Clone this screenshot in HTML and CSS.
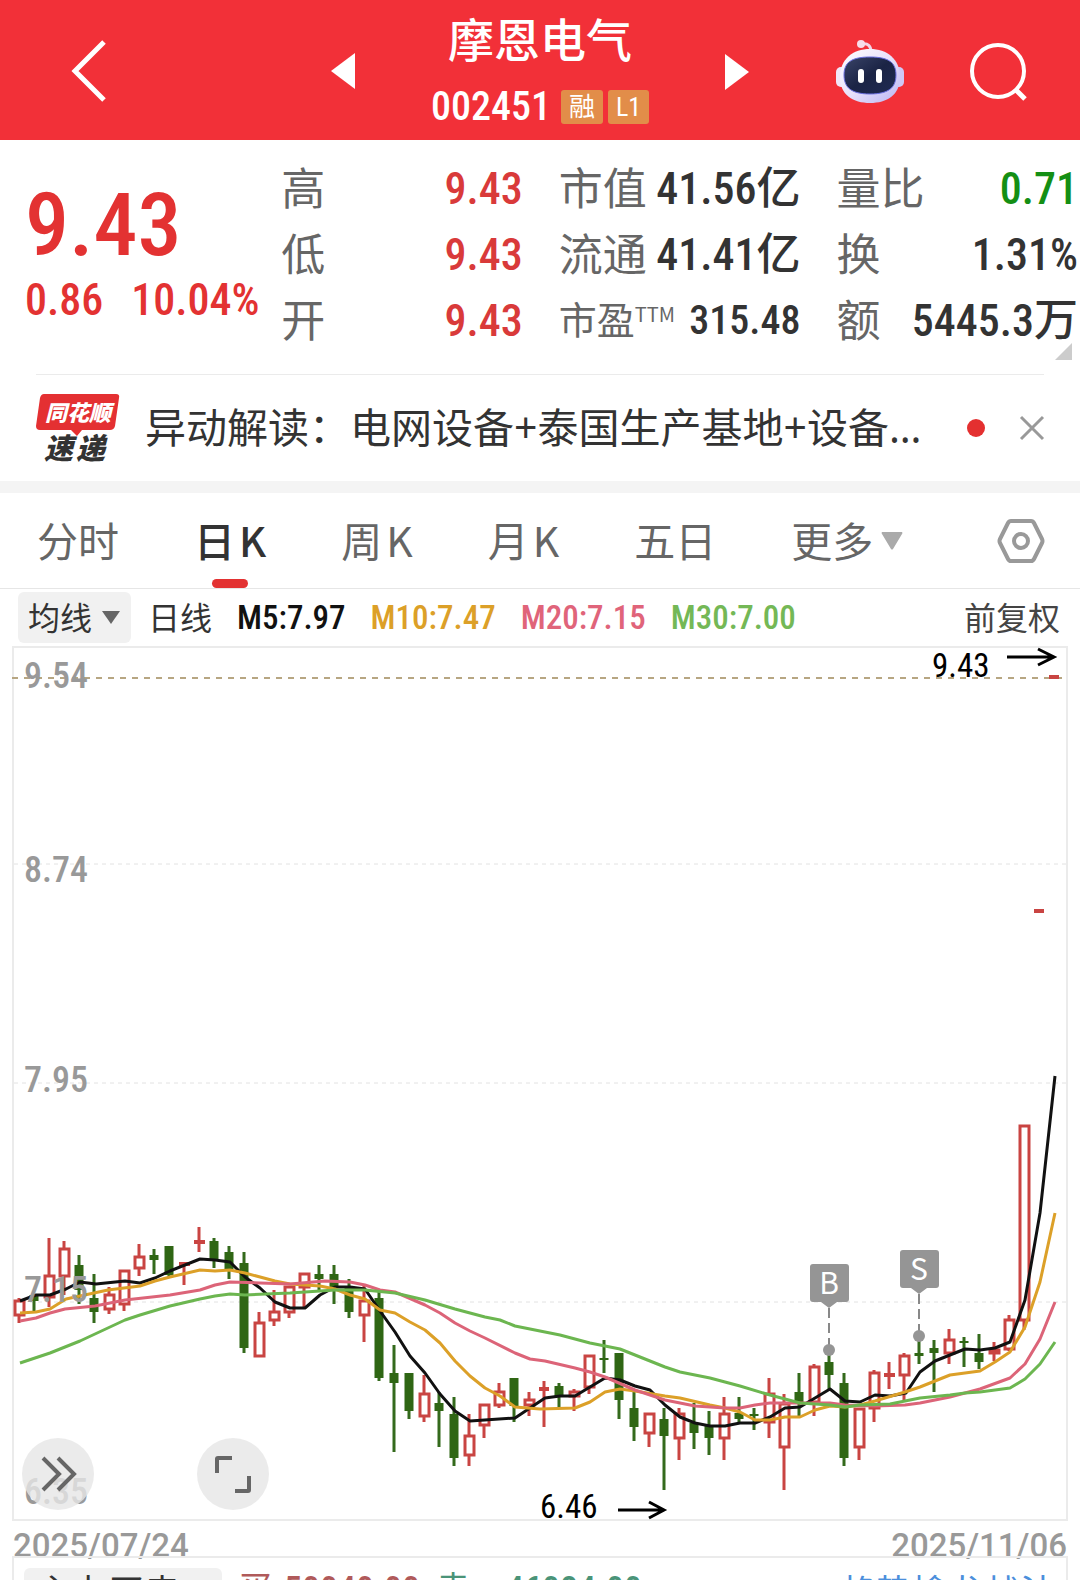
FILE: index.html
```html
<!DOCTYPE html>
<html lang="zh-CN">
<head>
<meta charset="utf-8">
<meta name="viewport" content="width=device-width, initial-scale=1">
<title>摩恩电气 002451</title>
<link rel="stylesheet" href="styles.css">
</head>
<body>
<div class="app">
  <header class="topbar">
    <div class="topbar-side topbar-left">
      <button class="icon-btn" aria-label="返回"><svg width="34" height="62" viewBox="0 0 34 62"><path d="M32 2 3 31l29 29" fill="none" stroke="#fff" stroke-width="5"/></svg></button>
      <button class="icon-btn" aria-label="上一只"><svg width="24" height="36" viewBox="0 0 24 36"><path d="M24 0v36L0 18z" fill="#fff"/></svg></button>
    </div>
    <div class="stock">
      <h1 class="stock-name">摩恩电气</h1>
      <div class="stock-meta"><span class="stock-code">002451</span><span class="tag">融</span><span class="tag">L1</span></div>
    </div>
    <div class="topbar-side topbar-right">
      <button class="icon-btn" aria-label="下一只"><svg width="24" height="36" viewBox="0 0 24 36"><path d="M0 0v36l24-18z" fill="#fff"/></svg></button>
      <button class="icon-btn robot" aria-label="智能助手">
        <svg width="68" height="64" viewBox="0 0 68 64">
          <defs>
            <linearGradient id="shell" x1="0" y1="0" x2="1" y2="1"><stop offset="0" stop-color="#fff"/><stop offset=".5" stop-color="#e9e2fb"/><stop offset="1" stop-color="#b9b4f2"/></linearGradient>
            <linearGradient id="visor" x1="0" y1="0" x2="1" y2="1"><stop offset="0" stop-color="#3a4468"/><stop offset=".5" stop-color="#1b2445"/><stop offset="1" stop-color="#202a52"/></linearGradient>
          </defs>
          <path d="M26 4c6-1 9 2 9 8" fill="none" stroke="#f3d5e6" stroke-width="3"/>
          <circle cx="25" cy="4" r="4" fill="#f7dce9"/>
          <rect x="0" y="27" width="12" height="20" rx="5" fill="#f1e6f8"/>
          <rect x="56" y="27" width="12" height="20" rx="5" fill="#cfc8f6"/>
          <path d="M34 9c17 0 30 10 30 28S51 63 34 63 4 55 4 37 17 9 34 9z" fill="url(#shell)"/>
          <path d="M34 17c18 0 26 5 26 18S52 54 34 54 8 48 8 35s8-18 26-18z" fill="url(#visor)" stroke="#6b6fe0" stroke-width="1"/>
          <rect x="22" y="29" width="6" height="14" rx="3" fill="#fff"/>
          <rect x="40" y="29" width="6" height="14" rx="3" fill="#fff"/>
        </svg>
      </button>
      <button class="icon-btn" aria-label="搜索"><svg width="58" height="58" viewBox="0 0 58 58"><circle cx="28" cy="28" r="26" fill="none" stroke="#fff" stroke-width="4"/><path d="m45 46 10 10" stroke="#fff" stroke-width="5"/></svg></button>
    </div>
  </header>

  <section class="quote">
    <div class="price">
      <div class="price-now">9.43</div>
      <div class="price-change"><span>0.86</span><span>10.04%</span></div>
    </div>
    <dl class="stats">
      <div class="stat"><dt>高</dt><dd class="up">9.43</dd></div>
      <div class="stat"><dt>市值</dt><dd>41.56亿</dd></div>
      <div class="stat"><dt>量比</dt><dd class="down">0.71</dd></div>
      <div class="stat"><dt>低</dt><dd class="up">9.43</dd></div>
      <div class="stat"><dt>流通</dt><dd>41.41亿</dd></div>
      <div class="stat"><dt>换</dt><dd>1.31%</dd></div>
      <div class="stat"><dt>开</dt><dd class="up">9.43</dd></div>
      <div class="stat stat-small"><dt>市盈<sup>TTM</sup></dt><dd>315.48</dd></div>
      <div class="stat"><dt>额</dt><dd>5445.3万</dd></div>
    </dl>
    <svg class="expand" width="17" height="17" viewBox="0 0 17 17"><path d="M17 0v17H0z" fill="#ccc"/></svg>
  </section>

  <section class="news">
    <svg class="news-logo" width="84" height="68" viewBox="0 0 84 68" role="img" aria-label="同花顺速递">
      <path d="M8 0h72q4 0 3 4l-4 28q-1 4-5 4H46l-5 6-6-6H4q-4 0-4-4L4 4q1-4 4-4z" fill="#e43032"/>
      <text class="logo-top" x="9" y="27">同花顺</text>
      <text class="logo-bottom" x="8" y="65">速</text><text class="logo-bottom" x="40" y="65">递</text>
    </svg>
    <a class="news-text" href="#news">异动解读：电网设备+泰国生产基地+设备…</a>
    <span class="dot"></span>
    <button class="icon-btn" aria-label="关闭"><svg width="24" height="24" viewBox="0 0 24 24"><path d="m1 1 22 22M23 1 1 23" stroke="#999" stroke-width="3"/></svg></button>
  </section>

  <nav class="tabs">
    <button class="tab">分时</button>
    <button class="tab tab-k active">日<span>K</span></button>
    <button class="tab tab-k">周<span>K</span></button>
    <button class="tab tab-k">月<span>K</span></button>
    <button class="tab">五日</button>
    <button class="tab">更多<svg class="tab-arrow" width="22" height="18" viewBox="0 0 22 18"><path d="M1 0h20q1 1 0 2L12 17q-1 1-2 0L1 2Q0 1 1 0z" fill="#aaa"/></svg></button>
    <button class="icon-btn settings" aria-label="设置"><svg width="46" height="44" viewBox="0 0 46 44"><path d="M13 2h20q2 0 3 2l8 16q1 2 0 4l-8 16q-1 2-3 2H13q-2 0-3-2L2 24q-1-2 0-4l8-16q1-2 3-2z" fill="none" stroke="#999" stroke-width="4"/><circle cx="23" cy="22" r="7" fill="none" stroke="#999" stroke-width="4"/></svg></button>
  </nav>

  <div class="legend">
    <button class="pill"><span>均线</span><svg width="18" height="13" viewBox="0 0 18 13"><path d="M0 0h18L9 13z" fill="#666"/></svg></button>
    <span class="legend-period">日线</span>
    <span class="ma ma5">M5:7.97</span>
    <span class="ma ma10">M10:7.47</span>
    <span class="ma ma20">M20:7.15</span>
    <span class="ma ma30">M30:7.00</span>
    <button class="adjust">前复权</button>
  </div>

  <div class="chart">
    <svg class="chart-svg" viewBox="0 645 1080 876" role="img" aria-label="日K线图">
      <rect x="13" y="647" width="1054" height="873" fill="none" stroke="#ebebeb" stroke-width="2"/>
      <path class="grid" d="M14 864H1066M14 1083H1066M14 1302H1066"/>
      <path class="limit" d="M12 678H1063"/>

      <path class="wick-up" d="M19 1298v25M49 1238v69M64 1241v54M109 1287v27M124 1270v41M139 1244v32M184 1264v21M199 1227v25M259 1312v44M274 1290v36M289 1286v32M304 1273v34M364 1286v56M424 1375v47M469 1414v52M484 1404v34M499 1383v25M529 1392v24M544 1381v46M574 1389v22M589 1355v39M649 1413v34M679 1408v52M724 1397v63M769 1378v60M784 1394v96M814 1364v52M859 1408v52M874 1370v52M889 1362v27M904 1353v47M949 1329v35M994 1342v19M1009 1315v36M1024 1125v205"/>
      <path class="body-up" d="M15 1301h9v14h-9zM45 1276h9v21h-9zM60 1249h9v27h-9zM105 1295h9v14h-9zM120 1271h9v33h-9zM135 1257h9v11h-9zM255 1323h9v33h-9zM270 1312h9v8h-9zM285 1287h9v25h-9zM300 1274h9v13h-9zM360 1301h9v14h-9zM420 1394h9v22h-9zM465 1436h9v19h-9zM480 1405h9v20h-9zM495 1392h9v13h-9zM525 1400h9v5h-9zM570 1392h9v4h-9zM585 1356h9v31h-9zM645 1414h9v19h-9zM675 1414h9v24h-9zM720 1414h9v24h-9zM765 1394h9v28h-9zM780 1404h9v43h-9zM810 1367h9v35h-9zM855 1409h9v38h-9zM870 1373h9v35h-9zM900 1356h9v19h-9zM945 1340h9v13h-9zM990 1350h9v3h-9zM1005 1320h9v29h-9zM1020 1126h9v194h-9z"/>
      <path class="bar-up" d="M179 1264h11M194 1242h11M539 1389h10M884 1375h11M1034 911h10M1049 677h10"/>

      <path class="wick-down" d="M34 1295v16M79 1255v49M94 1274v49M154 1249v25M169 1246v32M214 1238v30M229 1246v33M244 1252v101M319 1265v26M334 1265v39M349 1279v39M379 1291v90M394 1345v107M409 1373v46M439 1392v55M454 1397v69M514 1378v44M559 1383v24M604 1340v33M619 1353v66M634 1392v49M664 1408v82M694 1403v46M709 1411v44M739 1397v25M754 1408v22M799 1373v43M829 1351v39M844 1373v93M919 1337v27M934 1340v52M964 1337v30M979 1334v35"/>
      <path class="body-down" d="M34 1295v6M79 1265v25M94 1298v14M154 1255v5M169 1246v29M214 1241v20M229 1252v17M244 1263v85M319 1274v5M334 1274v14M349 1288v24M379 1298v80M394 1373v10M409 1373v38M439 1403v8M454 1414v44M514 1378v28M559 1386v11M604 1358v2M619 1353v47M634 1408v19M664 1419v17M694 1423v10M709 1426v12M739 1413v6M754 1414v2M799 1392v11M829 1362v13M844 1383v75M919 1353v3M934 1348v5M964 1341v2M979 1353v9"/>

      <polyline class="line line5" points="20,1301 36,1295 50,1295 66,1289 80,1282 96,1284 125,1281 140,1283 155,1278 170,1271 200,1259 215,1260 230,1262 245,1277 260,1288 275,1302 290,1308 305,1308 320,1295 335,1287 350,1287 365,1289 380,1311 395,1332 410,1356 425,1373 440,1394 455,1411 470,1421 515,1418 530,1408 545,1398 560,1396 575,1396 590,1387 605,1378 620,1380 635,1386 650,1390 665,1405 680,1417 695,1423 710,1426 725,1426 740,1423 755,1423 770,1417 785,1408 800,1407 815,1398 830,1389 845,1401 860,1402 875,1395 890,1396 906,1393 920,1372 935,1361 950,1355 965,1349 980,1350 995,1348 1010,1342 1025,1300 1040,1213 1055,1076"/>
      <polyline class="line line10" points="20,1313 36,1312 50,1309 66,1299 80,1296 108,1290 140,1286 155,1281 170,1277 200,1270 215,1271 230,1270 245,1273 275,1281 290,1284 320,1286 335,1289 350,1295 365,1299 380,1310 395,1313 410,1322 425,1330 440,1343 455,1361 470,1376 485,1388 500,1396 515,1407 540,1409 575,1408 590,1402 605,1392 620,1389 635,1391 665,1396 680,1398 710,1405 725,1408 740,1412 755,1420 770,1420 785,1417 800,1417 815,1410 830,1406 845,1407 860,1405 875,1401 905,1392 920,1387 950,1375 980,1371 995,1362 1010,1352 1025,1327 1040,1282 1055,1213"/>
      <polyline class="line line20" points="20,1321 36,1318 50,1313 65,1309 95,1306 125,1300 170,1295 200,1290 215,1285 230,1282 260,1283 290,1284 325,1281 350,1282 365,1285 380,1290 395,1292 425,1305 440,1313 455,1323 470,1331 485,1338 515,1353 530,1359 545,1361 575,1368 590,1372 605,1377 635,1390 665,1400 695,1406 725,1408 740,1408 755,1405 770,1403 800,1403 830,1403 845,1405 875,1406 905,1405 920,1403 950,1397 980,1389 1010,1378 1025,1364 1040,1339 1055,1302"/>
      <polyline class="line line30" points="20,1363 50,1353 80,1341 125,1320 140,1315 170,1306 200,1299 215,1296 230,1294 245,1295 290,1293 320,1291 335,1290 365,1290 395,1293 425,1300 455,1309 485,1317 500,1320 515,1326 540,1331 560,1335 590,1343 620,1349 635,1355 650,1361 665,1367 680,1372 710,1378 725,1382 740,1386 770,1395 800,1403 830,1405 845,1407 860,1405 890,1404 920,1398 950,1395 965,1393 980,1392 1010,1388 1025,1379 1040,1364 1055,1342"/>

      <g class="axis">
        <text x="24" y="688">9.54</text>
        <text x="24" y="882">8.74</text>
        <text x="24" y="1092">7.95</text>
        <text x="24" y="1302">7.15</text>
        <text x="24" y="1504">6.35</text>
      </g>

      <g class="extreme">
        <text x="932" y="677">9.43</text>
        <path d="M1007 657h46M1038 649l16 8-16 8"/>
        <text x="540" y="1518">6.46</text>
        <path d="M618 1510h44M649 1502l15 8-15 8"/>
      </g>

      <g class="marker">
        <path class="marker-line" d="M829 1308v40"/>
        <circle cx="829" cy="1350" r="6"/>
        <path d="M813 1264h33q3 0 3 3v32q0 3-3 3h-9l-8 6-8-6h-8q-3 0-3-3v-32q0-3 3-3z"/>
        <text x="829" y="1294">B</text>
        <path class="marker-line" d="M919 1294v40"/>
        <circle cx="919" cy="1336" r="6"/>
        <path d="M903 1250h33q3 0 3 3v32q0 3-3 3h-9l-8 6-8-6h-8q-3 0-3-3v-32q0-3 3-3z"/>
        <text x="919" y="1280">S</text>
      </g>
    </svg>
    <div class="chart-tools">
      <button class="round-btn" aria-label="展开"><svg width="36" height="36" viewBox="0 0 36 36"><path d="m3 2 16 16L3 34M18 2l16 16-16 16" fill="none" stroke="#666" stroke-width="4"/></svg></button>
      <button class="round-btn" aria-label="全屏"><svg width="38" height="38" viewBox="0 0 38 38"><path d="M3 18V4q0-1 1-1h14M21 36h13q1 0 1-1V21" fill="none" stroke="#666" stroke-width="4"/></svg></button>
    </div>
  </div>
  <div class="dates"><time>2025/07/24</time><time>2025/11/06</time></div>

  <section class="sub">
    <button class="sub-pick">主力买卖<svg width="18" height="13" viewBox="0 0 18 13"><path d="M0 0h18L9 13z" fill="#666"/></svg></button>
    <span class="sub-value sub-buy"><span>买</span>50040.00</span>
    <span class="sub-value sub-sell"><span>卖</span>46084.00</span>
    <a class="sub-link" href="#strategy">趋势擒龙战法</a>
  </section>
</div>
</body>
</html>
```
FILE: styles.css
```css
:root {
  --cjk: "Noto Sans CJK SC", sans-serif;
  --num: "Roboto Condensed", "Liberation Sans Narrow", "Noto Sans CJK SC", sans-serif;
  --red: #e33232;
}
* { box-sizing: border-box; }
body { margin: 0; background: #fff; color: #333; font-family: var(--cjk); }
button { margin: 0; padding: 0; border: 0; background: none; color: inherit; font: inherit; }
a { color: inherit; text-decoration: none; }
svg { display: block; flex: none; overflow: visible; }
.app { height: 100vh; overflow: hidden; display: flex; flex-direction: column; }
.app > * { flex: none; }
.icon-btn { display: block; flex: none; }

/* top bar */
.topbar { display: grid; grid-template-columns: 355fr 370fr 355fr; min-height: 140px; background: #f23038; color: #fff; }
.topbar-side { display: flex; align-items: center; justify-content: space-between; }
.topbar-left { padding: 2px 0 0 72px; }
.topbar-right { padding: 4px 52px 0 0; }
.robot { margin-left: 20px; }
.stock { display: flex; flex-direction: column; align-items: center; padding-top: 7px; }
.stock-name { margin: 0; font-size: 46px; line-height: 60px; font-weight: 500; }
.stock-meta { display: flex; align-items: center; gap: 5px; margin-top: 18px; height: 44px; }
.stock-code { margin-right: 5px; font: 500 40px/44px var(--num); }
.tag { padding: 0 8px; border-radius: 3px; background: #e28d49; font: 400 26px/34px var(--num); }

/* quote */
.quote { position: relative; display: flex; padding: 16px 2px 20px 25px; }
.price { flex: 256 1 0; color: var(--red); font-family: var(--num); font-weight: 500; }
.price-now { padding-top: 22px; font-size: 88px; line-height: 94px; }
.price-change { display: flex; gap: 28px; font-size: 44px; line-height: 56px; }
.stats { flex: 796 1 0; display: grid; grid-template-columns: repeat(3, 1fr); column-gap: 36px; margin: 0; }
.stat { display: flex; justify-content: space-between; height: 66px; white-space: nowrap; }
.stat dt { color: #666; font-size: 44px; line-height: 60px; }
.stat dd { margin: 0; font: 500 44px/66px var(--num); }
.stat dd.up { color: #d93a3a; }
.stat dd.down { color: #148f14; }
.stat-small dt { font-size: 38px; }
.stat-small dd { font-size: 40px; }
.stat sup { font-size: 20px; line-height: 20px; vertical-align: 12px; }
.expand { position: absolute; right: 8px; bottom: 14px; }

/* news */
.news { display: flex; align-items: center; height: 107px; margin: 0 36px; border-top: 1px solid #ebebeb; }
.news-logo { margin-right: 25px; }
.logo-top { font: italic 900 22px var(--cjk); fill: #fff; }
.logo-bottom { font: italic 900 29px var(--cjk); fill: #333; }
.news-text { flex: 1; min-width: 0; padding-bottom: 2px; white-space: nowrap; font-family: "Noto Sans", var(--cjk); font-size: 41px; line-height: 60px; }
.dot { width: 18px; height: 18px; margin-right: 35px; border-radius: 50%; background: #e43030; }

/* tabs */
.tabs { display: flex; align-items: center; gap: 75px; height: 108px; padding: 0 36px 0 37px; border-top: 12px solid #f4f4f4; border-bottom: 1px solid #e6e6e6; color: #666; font-size: 41px; line-height: 60px; }
.tab { display: flex; align-items: center; gap: 8px; height: 95px; padding-bottom: 4px; white-space: nowrap; position: relative; }
.tab-k { gap: 4px; }
.tab-arrow { margin-top: 4px; }
.tab.active { color: #333; font-weight: 500; }
.tab.active::after { content: ""; position: absolute; left: 50%; bottom: 0; width: 36px; height: 9px; margin-left: -18px; border-radius: 5px; background: var(--red); }
.settings { margin-left: auto; }

/* moving average legend */
.legend { display: flex; align-items: center; height: 56px; padding: 0 20px 0 18px; gap: 25px; white-space: nowrap; font-size: 32px; line-height: 46px; }
.pill { display: flex; align-items: center; gap: 10px; height: 51px; padding: 0 11px 0 10px; border-radius: 6px; background: #f1f1f1; }
.pill span, .legend-period, .adjust { padding-bottom: 3px; }
.legend-period { margin-left: -8px; }
.ma { padding-top: 2px; font: 500 33px/50px var(--num); }
.ma5 { color: #111; }
.ma10 { color: #dca028; }
.ma20 { color: #e0647a; }
.ma30 { color: #74b856; }
.adjust { margin-left: auto; color: #444; }

/* chart */
.chart { position: relative; }
.chart-svg { width: 100%; height: auto; }
.grid { stroke: #e2e2e2; stroke-width: 1; stroke-dasharray: 4 4; }
.limit { stroke: #b7a682; stroke-width: 2; stroke-dasharray: 6 6; }
.wick-up { stroke: #c94442; stroke-width: 3; }
.body-up { fill: #fff; stroke: #c94442; stroke-width: 3; }
.bar-up { stroke: #c94442; stroke-width: 4; }
.wick-down { stroke: #346a1c; stroke-width: 3; }
.body-down { stroke: #2f6614; stroke-width: 9; }
.line { fill: none; stroke-width: 3; stroke-linejoin: round; }
.line5 { stroke: #111; }
.line10 { stroke: #dca028; }
.line20 { stroke: #dc6478; }
.line30 { stroke: #6cb650; }
.axis text { font: 500 36px var(--num); fill: #999; }
.extreme text { font: 400 33px var(--num); fill: #000; }
.extreme path { fill: none; stroke: #000; stroke-width: 3; }
.marker { fill: #959595; }
.marker .marker-line { stroke: #888; stroke-width: 2; stroke-dasharray: 10 5; }
.marker text { font: 400 30px var(--cjk); fill: #fff; text-anchor: middle; }
.chart-tools { position: absolute; left: 22px; bottom: 11px; display: flex; gap: 103px; }
.round-btn { display: flex; align-items: center; justify-content: center; width: 72px; height: 72px; border-radius: 50%; background: rgba(230, 230, 230, .8); }
.dates { display: flex; justify-content: space-between; height: 35px; padding: 0 13px; color: #999; font: 500 33px/50px Roboto, sans-serif; }

/* sub chart */
.sub { display: flex; align-items: flex-start; gap: 16px; margin: 0 12px; padding: 10px 10px 0; border: 2px solid #ebebeb; border-bottom: 0; font-size: 36px; line-height: 36px; white-space: nowrap; }
.sub-pick { display: flex; align-items: flex-start; gap: 12px; height: 54px; padding: 4px 12px 0; border-radius: 6px; background: #f1f1f1; line-height: 36px; }
.sub-pick svg { margin-top: 14px; }
.sub-value { display: flex; gap: 12px; padding-top: 4px; font: 500 36px/36px var(--num); }
.sub-value span { font: 400 34px/30px var(--cjk); }
.sub-buy { color: #b05a5a; }
.sub-sell { gap: 36px; color: #4a9478; }
.sub-link { margin-left: auto; padding-top: 4px; color: #4c8fdc; }
```
